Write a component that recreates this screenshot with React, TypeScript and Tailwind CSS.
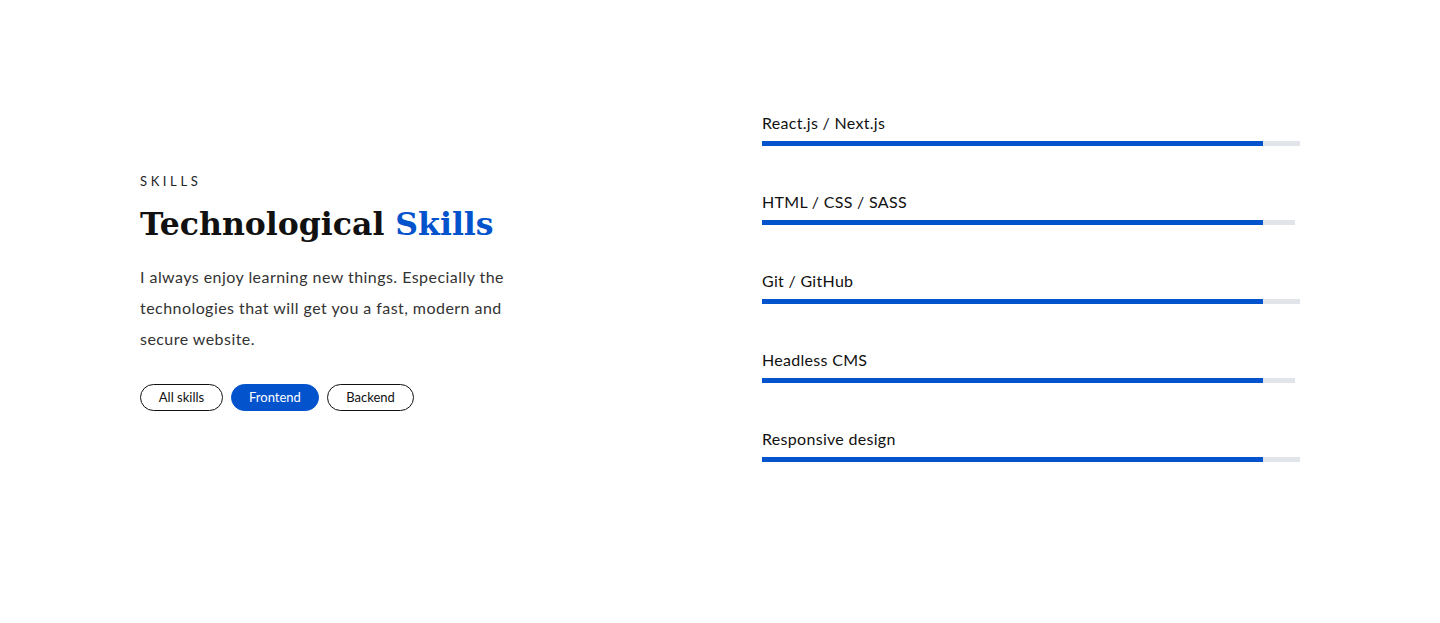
import React from "react";

const skills = [
  { name: "React.js / Next.js", track: 538 },
  { name: "HTML / CSS / SASS", track: 533 },
  { name: "Git / GitHub", track: 538 },
  { name: "Headless CMS", track: 533 },
  { name: "Responsive design", track: 538 },
];

export default function App() {
  return (
    <div className="w-[1440px] h-[623px] bg-white font-['Lato','Noto_Sans',sans-serif] text-[#1a1a1a]">
      <div className="flex pl-[140px] pt-[111px]">
        <div className="w-[622px] pt-[60px]">
          <div className="text-[13px] leading-[20px] tracking-[3.6px] text-[#222]">SKILLS</div>
          <h2 className="mt-[11px] font-['DejaVu_Serif','Liberation_Serif',serif] font-bold text-[31.5px] leading-[44px] text-[#111]">
            Technological <span className="text-[#0353cc]">Skills</span>
          </h2>
          <p className="mt-[15px] w-[390px] text-[16px] leading-[31px] tracking-[0.45px] text-[#333]">
            I always enjoy learning new things. Especially the technologies that will get you a fast, modern and secure website.
          </p>
          <div className="mt-[30px] flex gap-2">
            <button className="h-[27px] w-[83px] rounded-full border border-[#111] text-[13px] text-[#111]">All skills</button>
            <button className="h-[27px] w-[88px] rounded-full border border-[#0353cc] bg-[#0353cc] text-[13px] text-white">Frontend</button>
            <button className="h-[27px] w-[87px] rounded-full border border-[#111] text-[13px] text-[#111]">Backend</button>
          </div>
        </div>
        <div className="flex flex-col gap-[44px]">
          {skills.map((s) => (
            <div key={s.name} className="flex flex-col">
              <div className="h-[24px] text-[16px] leading-[24px] tracking-[0.3px] text-[#111]">{s.name}</div>
              <div className="mt-[6px] h-[5px] bg-[#e1e4e8]" style={{ width: s.track }}>
                <div className="h-full w-[501px] bg-[#0353cc]" />
              </div>
            </div>
          ))}
        </div>
      </div>
    </div>
  );
}
